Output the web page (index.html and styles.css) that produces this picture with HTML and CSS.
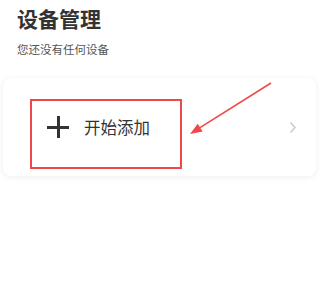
FILE: index.html
```html
<!DOCTYPE html>
<html lang="zh">
<head>
    <meta charset="UTF-8">
    <meta name="viewport" content="width=device-width, initial-scale=1.0">
    <title>设备管理</title>
    <link rel="stylesheet" href="styles.css">
</head>
<body>

    <div class="header">
        <div class="title">设备管理</div>
        <div class="subtitle">您还没有任何设备</div>
    </div>

    <div class="card">
        <div class="card__row">
            <div class="card__plus"></div>
            <div class="card__text">开始添加</div>
            <div class="card__chevron">
                <svg width="8" height="13" viewBox="0 0 8 13">
                    <path d="M1.5 1.5 L6 6.5 L1.5 11.5" fill="none" stroke="#c8c8c8" stroke-width="1.4"/>
                </svg>
            </div>
        </div>
        <div class="mark-box"></div>
    </div>

    <svg class="mark-arrow" width="320" height="289" viewBox="0 0 320 289">
        <line x1="271" y1="83" x2="200" y2="127.6" stroke="#f0484a" stroke-width="1.6"/>
        <polygon points="190,134 202.6,131.4 197.8,123.8" fill="#f0484a"/>
    </svg>

</body>
</html>
```

FILE: styles.css
```css
body {
    margin: 0;
    background-color: #fff;
    font-family: "Noto Sans CJK SC", "Noto Sans", sans-serif;
    color: #333;
    position: relative;
    height: 289px;
    overflow: hidden;
}

.header {
    padding: 4px 17px 0;
}

.title {
    font-size: 21px;
    line-height: 28px;
    font-weight: bold;
    color: #333;
}

.subtitle {
    margin-top: 9px;
    font-size: 11.5px;
    line-height: 16px;
    color: #555;
}

.card {
    position: relative;
    margin: 21px 4px 0 3px;
    height: 98px;
    background-color: #fff;
    border-radius: 8px;
    box-shadow: 0 1px 6px rgba(0, 0, 0, 0.07);
    display: flex;
    align-items: center;
}

.card__row {
    flex: 1;
    display: flex;
    align-items: center;
    padding: 0 19px 0 44px;
}

.card__plus {
    position: relative;
    width: 22px;
    height: 22px;
}

.card__plus::before,
.card__plus::after {
    content: "";
    position: absolute;
    background-color: #333;
}

.card__plus::before {
    left: 0;
    top: 9.5px;
    width: 22px;
    height: 3px;
}

.card__plus::after {
    left: 9.5px;
    top: 0;
    width: 3px;
    height: 22px;
}

.card__text {
    margin-left: 15px;
    font-size: 16.5px;
    line-height: 22px;
    color: #333;
}

.card__chevron {
    margin-left: auto;
    display: flex;
}

/* annotation box drawn over the row */
.mark-box {
    position: absolute;
    left: 27px;
    top: 21px;
    width: 148px;
    height: 66px;
    border: 2px solid #f0484a;
}

.mark-arrow {
    position: absolute;
    left: 0;
    top: 0;
    pointer-events: none;
}
```
